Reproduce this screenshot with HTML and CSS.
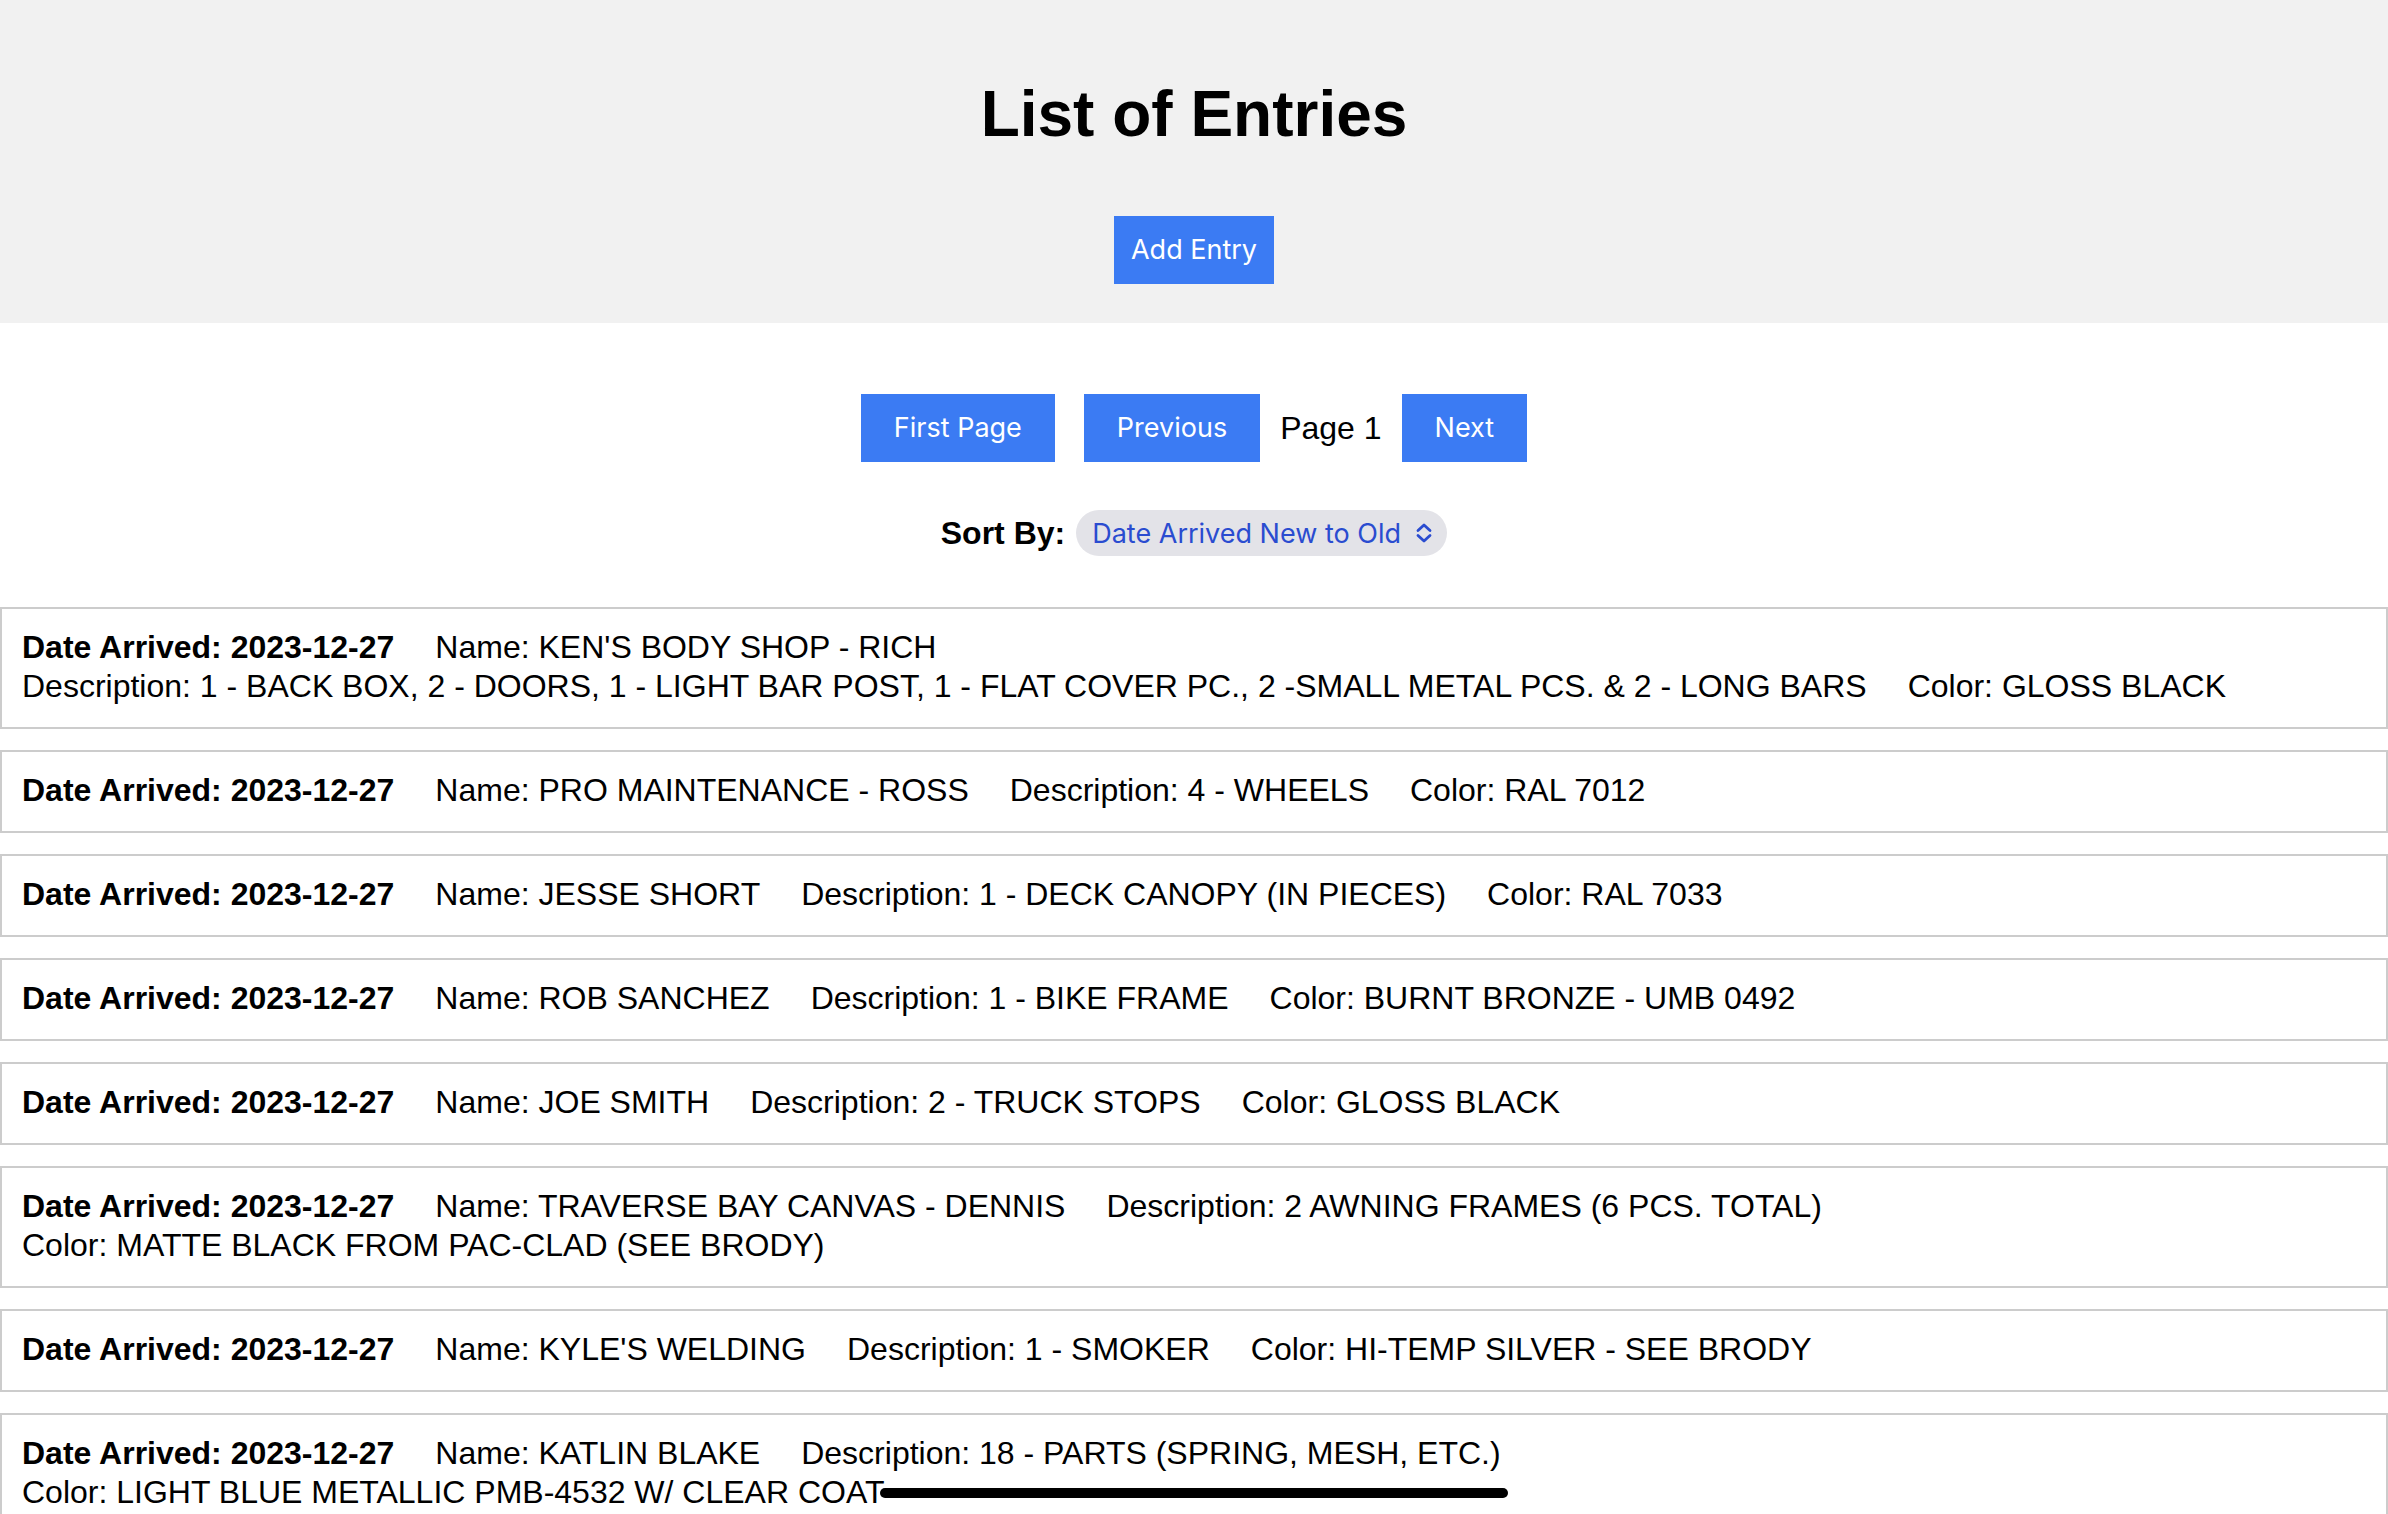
FILE: index.html
```html
<!DOCTYPE html>
<html lang="en">
<head>
<meta charset="utf-8">
<title>List of Entries</title>
<link rel="stylesheet" href="styles.css">
</head>
<body>
<header class="header">
  <h1 class="title">List of Entries</h1>
  <button class="btn btn-add">Add Entry</button>
</header>

<nav class="pagination">
  <button class="btn btn-page btn-first">First Page</button>
  <button class="btn btn-page">Previous</button>
  <span class="page-label">Page 1</span>
  <button class="btn btn-page">Next</button>
</nav>

<div class="sort">
  <span class="sort-label">Sort By:</span>
  <div class="select-wrap">
    <select class="sort-select">
      <option>Date Arrived New to Old</option>
    </select>
    <svg class="chevron" width="20" height="20" viewBox="0 0 20 20" aria-hidden="true">
      <path d="M4 7.5 L10 2 L16 7.5" fill="none" stroke="currentColor" stroke-width="2.8" stroke-linecap="round" stroke-linejoin="round"/>
      <path d="M4 12.5 L10 18 L16 12.5" fill="none" stroke="currentColor" stroke-width="2.8" stroke-linecap="round" stroke-linejoin="round"/>
    </svg>
  </div>
</div>

<main class="entries">
  <div class="entry">
    <span class="date">Date Arrived: 2023-12-27</span>
    <span>Name: KEN'S BODY SHOP - RICH</span>
    <span>Description: 1 - BACK BOX, 2 - DOORS, 1 - LIGHT BAR POST, 1 - FLAT COVER PC., 2 -SMALL METAL PCS. &amp; 2 - LONG BARS</span>
    <span>Color: GLOSS BLACK</span>
  </div>
  <div class="entry">
    <span class="date">Date Arrived: 2023-12-27</span>
    <span>Name: PRO MAINTENANCE - ROSS</span>
    <span>Description: 4 - WHEELS</span>
    <span>Color: RAL 7012</span>
  </div>
  <div class="entry">
    <span class="date">Date Arrived: 2023-12-27</span>
    <span>Name: JESSE SHORT</span>
    <span>Description: 1 - DECK CANOPY (IN PIECES)</span>
    <span>Color: RAL 7033</span>
  </div>
  <div class="entry">
    <span class="date">Date Arrived: 2023-12-27</span>
    <span>Name: ROB SANCHEZ</span>
    <span>Description: 1 - BIKE FRAME</span>
    <span>Color: BURNT BRONZE - UMB 0492</span>
  </div>
  <div class="entry">
    <span class="date">Date Arrived: 2023-12-27</span>
    <span>Name: JOE SMITH</span>
    <span>Description: 2 - TRUCK STOPS</span>
    <span>Color: GLOSS BLACK</span>
  </div>
  <div class="entry">
    <span class="date">Date Arrived: 2023-12-27</span>
    <span>Name: TRAVERSE BAY CANVAS - DENNIS</span>
    <span>Description: 2 AWNING FRAMES (6 PCS. TOTAL)</span>
    <span>Color: MATTE BLACK FROM PAC-CLAD (SEE BRODY)</span>
  </div>
  <div class="entry">
    <span class="date">Date Arrived: 2023-12-27</span>
    <span>Name: KYLE'S WELDING</span>
    <span>Description: 1 - SMOKER</span>
    <span>Color: HI-TEMP SILVER - SEE BRODY</span>
  </div>
  <div class="entry">
    <span class="date">Date Arrived: 2023-12-27</span>
    <span>Name: KATLIN BLAKE</span>
    <span>Description: 18 - PARTS (SPRING, MESH, ETC.)</span>
    <span>Color: LIGHT BLUE METALLIC PMB-4532 W/ CLEAR COAT</span>
  </div>
  <div class="entry">
    <span class="date">Date Arrived: 2023-12-26</span>
    <span>Name: MIKE JONES</span>
    <span>Description: 4 - RIMS</span>
    <span>Color: SATIN BLACK</span>
  </div>
</main>

<div class="home-indicator"></div>
</body>
</html>
```

FILE: styles.css
```css
html {
  overflow: hidden;
}

body {
  margin: 0;
  background: #ffffff;
  color: #000000;
  font-family: "Liberation Sans", Arial, Helvetica, sans-serif;
  font-size: 32px;
}

.header {
  background: #f1f1f1;
  padding: 77px 0 39px;
  text-align: center;
}

.title {
  margin: 0;
  font-size: 64px;
  line-height: 74px;
  font-weight: 700;
}

.btn {
  display: inline-block;
  border: none;
  border-radius: 0;
  background: #3b7bf3;
  color: #ffffff;
  font-family: Inter, "Noto Sans", sans-serif;
  font-size: 27px;
  font-weight: 400;
  height: 68px;
  line-height: 68px;
  margin: 0;
  cursor: pointer;
}

.btn-add {
  margin-top: 65px;
  padding: 0 17px;
  vertical-align: top;
}

.pagination {
  margin-top: 71px;
  display: flex;
  justify-content: center;
  align-items: center;
}

.btn-page {
  padding: 0 33px;
}

.btn-first {
  margin-right: 29px;
}

.page-label {
  margin: 0 20px;
  font-size: 32px;
}

.sort {
  margin-top: 48px;
  display: flex;
  justify-content: center;
  align-items: center;
  height: 46px;
}

.sort-label {
  font-weight: 700;
  font-size: 32px;
  margin-right: 11px;
}

.select-wrap {
  display: flex;
  align-items: center;
  height: 46px;
  padding: 0 13px 0 16px;
  border-radius: 23px;
  background: #e3e3e8;
  color: #2a4cd0;
}

.sort-select {
  appearance: none;
  -webkit-appearance: none;
  border: none;
  background: transparent;
  color: #2a4cd0;
  font-family: Inter, "Noto Sans", sans-serif;
  font-size: 27px;
  padding: 0;
  margin: 0 13px 0 0;
  outline: none;
}

.chevron {
  display: block;
}

.entries {
  margin-top: 51px;
}

.entry {
  display: flex;
  flex-wrap: wrap;
  column-gap: 41px;
  border: 2px solid #cccccc;
  padding: 19px 20px 21px;
  margin-bottom: 21px;
  line-height: 39px;
}

.date {
  font-weight: 700;
}

.home-indicator {
  position: fixed;
  left: 880px;
  top: 1488px;
  width: 628px;
  height: 10px;
  border-radius: 5px;
  background: #000000;
}
```
